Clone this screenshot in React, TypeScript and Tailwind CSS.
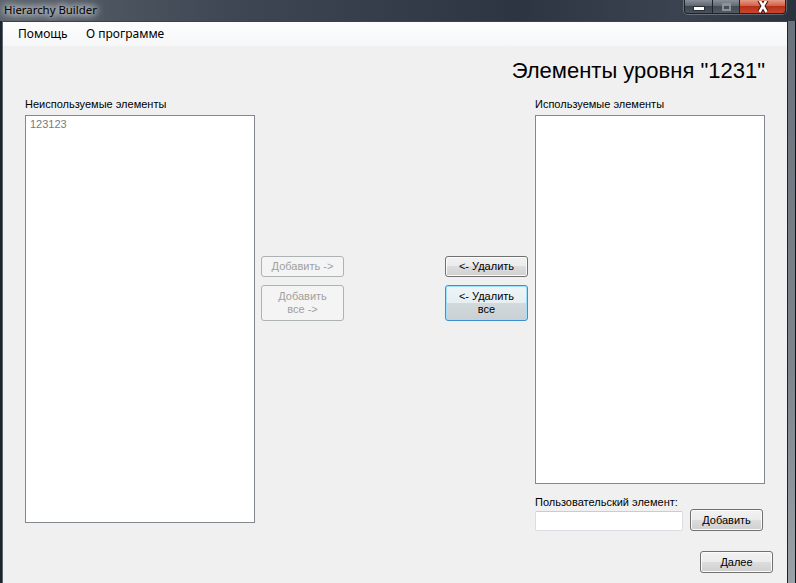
import React from "react";

const sans = "font-['Liberation_Sans',Arial,sans-serif]";
const ui = "font-['Noto_Sans','Open_Sans',sans-serif]";

function WinButton({
  children,
  className = "",
  variant = "normal",
}: {
  children: React.ReactNode;
  className?: string;
  variant?: "normal" | "disabled" | "focused";
}) {
  const v =
    variant === "disabled"
      ? "border-[#adb2b5] bg-[#f4f4f4] text-[#a0a0a0]"
      : variant === "focused"
      ? "border-[#3c8fd0] bg-[linear-gradient(to_bottom,#eef5f8_0%,#e6eef2_50%,#d3dadd_50%,#c8d0d4_100%)] text-black shadow-[inset_0_0_0_1px_#9fe0fa]"
      : "border-[#707070] bg-[linear-gradient(to_bottom,#f2f2f2_0%,#ebebeb_50%,#dddddd_50%,#cfcfcf_100%)] text-black shadow-[inset_0_0_0_1px_#fbfbfb]";
  return (
    <div
      className={`flex items-center justify-center rounded-[3px] border text-center text-[11px] leading-[13px] ${sans} ${v} ${className}`}
    >
      {children}
    </div>
  );
}

export default function App() {
  return (
    <div className="flex h-[583px] w-[796px] flex-col overflow-hidden bg-[#2b3440]">
      {/* Title bar */}
      <div className="flex h-[21px] items-start justify-between bg-[linear-gradient(to_right,#59616b_0%,#3d4652_30%,#2c3541_65%,#3a434f_85%,#2a323d_100%)]">
        <div
          className={`pl-[4px] text-[11.4px] leading-[20px] text-black ${ui} [text-shadow:0_0_6px_#fff,0_0_10px_#fff,0_0_14px_#fff]`}
        >
          Hierarchy Builder
        </div>
        <div className="mr-[10px] flex h-[14px] overflow-hidden rounded-b-[4px] border border-t-0 border-[#1c232c] shadow-[0_0_0_1px_rgba(255,255,255,0.25)]">
          <div className="flex w-[28px] items-center justify-center border-r border-[#1c232c] bg-[linear-gradient(to_bottom,#8a9098_0%,#5a626c_50%,#3c444e_50%,#4a525c_100%)]">
            <div className="mt-[3px] h-[3px] w-[10px] bg-white shadow-[0_0_0_1px_#2a2f36]" />
          </div>
          <div className="flex w-[27px] items-center justify-center border-r border-[#1c232c] bg-[linear-gradient(to_bottom,#8a9098_0%,#5e666f_50%,#444c56_50%,#515962_100%)]">
            <div className="h-[8px] w-[9px] border-2 border-[#8c9298] border-t-[3px]" />
          </div>
          <div className="flex w-[45px] items-center justify-center bg-[linear-gradient(to_bottom,#e49a86_0%,#cf5a3e_50%,#b8301a_50%,#c9462c_100%)]">
            <svg width="14" height="12" viewBox="0 0 14 12">
              <path
                d="M3.5 -1 L10.5 11 M10.5 -1 L3.5 11"
                stroke="#3b1a14"
                strokeWidth="4.5"
                fill="none"
              />
              <path
                d="M3.5 -1 L10.5 11 M10.5 -1 L3.5 11"
                stroke="#ffffff"
                strokeWidth="2.5"
                fill="none"
              />
            </svg>
          </div>
        </div>
      </div>

      <div className="flex flex-1">
        {/* left frame */}
        <div className="w-[3px] border-r border-[#5b6570] bg-[#1c242e]" />

        {/* client */}
        <div className="flex w-[784px] flex-col border-t border-[#3a424c]">
          {/* menu */}
          <div
            className={`flex h-[24px] items-center bg-[linear-gradient(to_bottom,#fdfdfd,#f6f7f8)] pl-[15px] text-[12px] text-black ${ui}`}
          >
            <span className="w-[68px]">Помощь</span>
            <span>О программе</span>
          </div>

          <div className="flex flex-1 flex-col bg-[#f0f0f0]">
            <div
              className={`mt-[13px] pr-[22px] text-right text-[22px] leading-[24px] text-black ${sans}`}
            >
              Элементы уровня "1231"
            </div>

            <div className="mt-[15px] flex">
              {/* left column */}
              <div className="ml-[22px] w-[230px]">
                <div className={`h-[13px] text-[11px] leading-[13px] text-black ${sans}`}>
                  Неиспользуемые элементы
                </div>
                <div className="mt-[4px] h-[408px] border border-[#828790] bg-white">
                  <div
                    className={`pl-[4px] pt-[2px] text-[11px] leading-[13px] text-[#7a7a7a] ${sans}`}
                  >
                    123123
                  </div>
                </div>
              </div>

              {/* middle col 1 */}
              <div className="ml-[6px] flex w-[83px] flex-col gap-[8px] pt-[158px]">
                <WinButton variant="disabled" className="h-[21px]">
                  Добавить -&gt;
                </WinButton>
                <WinButton variant="disabled" className="h-[36px]">
                  Добавить
                  <br />
                  все -&gt;
                </WinButton>
              </div>

              {/* middle col 2 */}
              <div className="ml-[101px] flex w-[83px] flex-col gap-[8px] pt-[158px]">
                <WinButton className="h-[21px]">&lt;- Удалить</WinButton>
                <WinButton variant="focused" className="h-[36px]">
                  &lt;- Удалить
                  <br />
                  все
                </WinButton>
              </div>

              {/* right column */}
              <div className="ml-[7px] w-[230px]">
                <div className={`h-[13px] text-[11px] leading-[13px] text-black ${sans}`}>
                  Используемые элементы
                </div>
                <div className="mt-[4px] h-[369px] border border-[#828790] bg-white" />
                <div
                  className={`mt-[12px] h-[13px] text-[11px] leading-[13px] text-black ${sans}`}
                >
                  Пользовательский элемент:
                </div>
                <div className="flex items-end">
                  <div className="h-[20px] w-[148px] rounded-[2px] border border-[#dadde2] border-t-[#c9ccd2] bg-white" />
                  <WinButton className="ml-[7px] h-[22px] w-[73px]">Добавить</WinButton>
                </div>
              </div>
            </div>

            <div className="mt-[20px] flex justify-end pr-[14px]">
              <WinButton className="h-[22px] w-[73px]">Далее</WinButton>
            </div>
          </div>
        </div>

        {/* right frame */}
        <div className="w-[9px] border-l border-r border-l-[#1c232c] border-r-[#10151b] bg-[linear-gradient(to_bottom,#6a727b,#7c848c_60%,#9aa1a7)]" />
      </div>
    </div>
  );
}
